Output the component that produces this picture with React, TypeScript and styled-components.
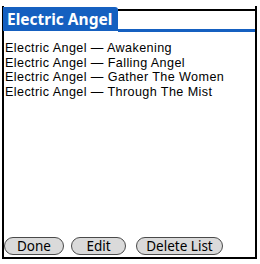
import React from "react";
import styled, { createGlobalStyle } from "styled-components";

const Global = createGlobalStyle`
  html, body { margin: 0; padding: 0; background: #fff; }
  body { font-family: "Noto Sans", "Liberation Sans", sans-serif; }
`;

const Screen = styled.div`
  width: 260px;
  height: 264px;
  box-sizing: border-box;
  padding: 6px 3px 5px 2px;
  display: flex;
  flex-direction: column;
`;

const Frame = styled.div`
  flex: 1;
  display: flex;
  flex-direction: column;
  border-left: 2px solid #000;
  border-right: 2px solid #000;
  border-bottom: 2px solid #000;
`;

const TitleBar = styled.div`
  display: flex;
  align-items: flex-end;
  height: 25px;
  margin-left: -1px;
`;

const Tab = styled.div`
  background: #1560c0;
  color: #fff;
  font-weight: 700;
  font-size: 15.5px;
  height: 24px;
  line-height: 25px;
  padding: 0 6px 0 4px;
  border-top-right-radius: 3px;
  white-space: nowrap;
`;

const TitleRule = styled.div`
  flex: 1;
  height: 23px;
  box-sizing: border-box;
  border-top: 2px solid #000;
  border-bottom: 3px solid #1560c0;
  margin-bottom: -1px;
`;

const List = styled.div`
  flex: 1;
  padding: 10px 1px 0 1px;
  display: flex;
  flex-direction: column;
`;

const Row = styled.div`
  font-family: "Liberation Sans", sans-serif;
  font-size: 12.6px;
  letter-spacing: 0.4px;
  line-height: 14.5px;
  height: 14.5px;
  color: #000;
  white-space: nowrap;
`;

const Buttons = styled.div`
  display: flex;
  padding: 0 0 2px 0;
`;

const Button = styled.button<{ $w: number; $gap: number }>`
  width: ${(p) => p.$w}px;
  margin-left: ${(p) => p.$gap}px;
  height: 18px;
  box-sizing: border-box;
  border: 1.6px solid #4a4a4a;
  border-radius: 9px;
  background: #dadada;
  font-family: "Noto Sans", "Liberation Sans", sans-serif;
  font-size: 13.5px;
  line-height: 14px;
  color: #000;
  padding: 0;
`;

const rows = [
  "Electric Angel — Awakening",
  "Electric Angel — Falling Angel",
  "Electric Angel — Gather The Women",
  "Electric Angel — Through The Mist",
];

export default function App() {
  return (
    <>
      <Global />
      <Screen>
        <Frame>
          <TitleBar>
            <Tab>Electric Angel</Tab>
            <TitleRule />
          </TitleBar>
          <List>
            {rows.map((r) => (
              <Row key={r}>{r}</Row>
            ))}
          </List>
          <Buttons>
            <Button $w={60} $gap={0}>Done</Button>
            <Button $w={55} $gap={7}>Edit</Button>
            <Button $w={87} $gap={10}>Delete List</Button>
          </Buttons>
        </Frame>
      </Screen>
    </>
  );
}
